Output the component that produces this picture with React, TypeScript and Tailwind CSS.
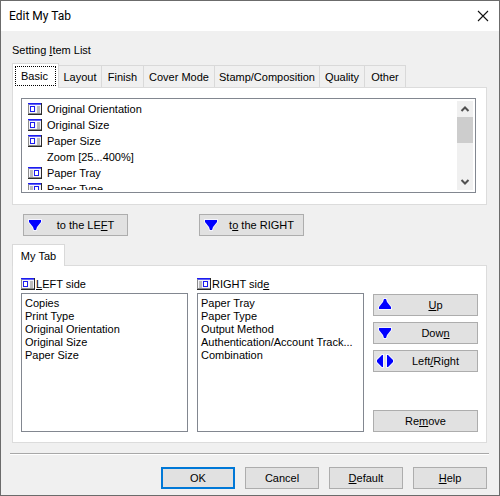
import type { ReactNode } from "react";

type Side = "left" | "right";
type ArrowKind = "up" | "down" | "both";

const tabs = [
  { name: "Layout", width: "w-[43px]" },
  { name: "Finish", width: "w-[42px]" },
  { name: "Cover Mode", width: "w-[71px]" },
  { name: "Stamp/Composition", width: "w-[105px]" },
  { name: "Quality", width: "w-[45px]" },
  { name: "Other", width: "w-[41px]" },
];

const items: { name: string; side?: Side }[] = [
  { name: "Original Orientation", side: "left" },
  { name: "Original Size", side: "left" },
  { name: "Paper Size", side: "left" },
  { name: "Zoom [25...400%]" },
  { name: "Paper Tray", side: "right" },
  { name: "Paper Type", side: "right" },
];

const leftItems = ["Copies", "Print Type", "Original Orientation", "Original Size", "Paper Size"];
const rightItems = [
  "Paper Tray",
  "Paper Type",
  "Output Method",
  "Authentication/Account Track...",
  "Combination",
];

function SideIcon({ side }: { side: Side }) {
  const active = side === "left" ? 2 : 6;
  const idle = side === "left" ? 9 : 2;
  return (
    <svg width="15" height="12" viewBox="0 0 15 12" shapeRendering="crispEdges" aria-hidden="true" className="shrink-0">
      <rect width="14" height="12" fill="#2a2a2a" />
      <rect width="13" height="11" fill="#8c8c8c" />
      <rect x="1" y="1" width="12" height="9" fill="#f4f4fa" />
      <rect width="13" height="1" fill="#1c1cf0" />
      <rect x="1" y="1" width="12" height="1" fill="#6060f4" />
      <rect x={idle} y="3" width="3" height="7" fill="#bcbcbc" />
      <rect x={active} y="3" width="5" height="6" fill="#1c1cf0" />
      <rect x={active + 1} y="4" width="3" height="4" fill="#fff" />
    </svg>
  );
}

function Arrow({ kind }: { kind: ArrowKind }) {
  const shape = {
    up: "M9 2 H11 L12 5 L16 10 V12 H4 V10 L8 5 Z",
    down: "M4 3 H16 V5 L12 10 L11 13 H9 L8 10 L4 5 Z",
    both: "M8 2 V14 H7 L2 9 V7 L7 2 Z M12 2 H13 L18 7 V9 L13 14 H12 Z",
  }[kind];
  return (
    <svg width="20" height="16" viewBox="0 0 20 16" aria-hidden="true" className="shrink-0">
      <path d={shape} fill="#0000ff" stroke="#f4f4ff" strokeWidth="2" paintOrder="stroke" />
    </svg>
  );
}

function Button({
  children,
  className = "",
  icon,
  primary = false,
}: {
  children: ReactNode;
  className?: string;
  icon?: ArrowKind;
  primary?: boolean;
}) {
  return (
    <button
      type="button"
      className={`flex h-[22px] items-center bg-[#e1e1e1] leading-4 ${primary ? "border-2 border-[#0078d7]" : "border border-[#adadad]"} ${icon ? "px-px" : ""} ${className}`}
    >
      {icon && <Arrow kind={icon} />}
      <span className="flex-1 text-center">{children}</span>
    </button>
  );
}

function ListColumn({ id, side, label, options }: { id: string; side: Side; label: ReactNode; options: string[] }) {
  return (
    <div className="flex min-w-0 flex-1 flex-col">
      <label htmlFor={id} className="flex h-4 items-center leading-4">
        <SideIcon side={side} />
        <span>{label}</span>
      </label>
      <select
        id={id}
        size={5}
        className="mt-px min-h-[80px] w-full flex-1 appearance-none overflow-hidden border border-[#828790] bg-white px-[3px] py-[3px] leading-[13px]"
      >
        {options.map((option) => (
          <option key={option} className="h-[13px] min-h-0 p-0 leading-[13px]">
            {option}
          </option>
        ))}
      </select>
    </div>
  );
}

export default function App() {
  return (
    <main className="flex min-h-screen w-full flex-col border border-[#6b6b6b] bg-[#f0f0f0] font-['Liberation_Sans',Arial,sans-serif] text-[11px] leading-4 text-black">
      <header className="flex h-[30px] items-center justify-between bg-white px-2">
        <h1 className="font-[Roboto,'Noto_Sans',sans-serif] text-xs leading-4">Edit My Tab</h1>
        <button type="button" aria-label="Close" className="flex size-4 items-center justify-center">
          <svg width="12" height="12" viewBox="0 0 12 12" aria-hidden="true">
            <path d="M1 1 L11 11 M11 1 L1 11" stroke="#111" strokeWidth="1.1" fill="none" />
          </svg>
        </button>
      </header>

      <div className="flex flex-1 flex-col pt-[11px] pr-3 pb-[6px] pl-[11px]">
        <h2 id="setting-list" className="leading-4">
          Setting <u>I</u>tem List
        </h2>

        <div role="tablist" aria-labelledby="setting-list" className="mt-[5px] flex h-6 items-end">
          <button
            type="button"
            role="tab"
            aria-selected="true"
            className="z-10 -mb-px h-[25px] w-[47px] border border-b-0 border-[#d9d9d9] bg-white p-[2px]"
          >
            <span className="flex h-5 items-center border border-dotted border-black pl-[5px]">Basic</span>
          </button>
          {tabs.map((tab) => (
            <button
              key={tab.name}
              type="button"
              role="tab"
              aria-selected="false"
              className={`h-[22px] border-t border-r border-[#d9d9d9] text-center whitespace-nowrap ${tab.width}`}
            >
              {tab.name}
            </button>
          ))}
        </div>

        <section className="border border-[#dcdcdc] bg-white pt-[10px] pr-[10px] pb-[11px] pl-2">
          <div className="flex h-[95px] border border-[#828790] p-[2px]">
            <ul role="listbox" aria-labelledby="setting-list" className="flex-1 overflow-hidden pl-1">
              {items.map((item) => (
                <li key={item.name} role="option" aria-selected="false" className="flex h-4 items-center gap-1">
                  <span className="flex w-[15px]">{item.side && <SideIcon side={item.side} />}</span>
                  {item.name}
                </li>
              ))}
            </ul>
            <div className="flex w-4 flex-col bg-[#f0f0f0]">
              <button type="button" aria-label="Scroll up" className="flex h-4 items-center justify-center">
                <svg width="10" height="8" viewBox="0 0 10 8" aria-hidden="true">
                  <path d="M1.500 6 L5 2.500 L8.500 6" stroke="#505050" strokeWidth="2" fill="none" />
                </svg>
              </button>
              <div className="h-[26px] bg-[#cdcdcd]" />
              <button type="button" aria-label="Scroll down" className="mt-auto flex h-4 items-center justify-center">
                <svg width="10" height="8" viewBox="0 0 10 8" aria-hidden="true">
                  <path d="M1.500 2 L5 5.500 L8.500 2" stroke="#505050" strokeWidth="2" fill="none" />
                </svg>
              </button>
            </div>
          </div>
        </section>

        <div className="mt-[9px] flex gap-[71px] pl-[11px]">
          <Button icon="down" className="w-[105px]">
            to the LE<u>F</u>T
          </Button>
          <Button icon="down" className="w-[105px]">
            t<u>o</u> the RIGHT
          </Button>
        </div>

        <div role="tablist" aria-label="My Tab" className="mt-2 flex">
          <button
            type="button"
            role="tab"
            aria-selected="true"
            className="z-10 -mb-px h-[22px] w-[53px] border border-b-0 border-[#d9d9d9] bg-white text-center leading-4"
          >
            My Tab
          </button>
        </div>

        <section className="flex flex-1 gap-[9px] border border-[#dcdcdc] bg-white px-2 py-[10px]">
          <ListColumn id="left-side" side="left" label={<><u>L</u>EFT side</>} options={leftItems} />
          <ListColumn id="right-side" side="right" label={<>RIGHT sid<u>e</u></>} options={rightItems} />
          <div className="flex w-[105px] flex-col gap-[6px] pt-[18px]">
            <Button icon="up"><u>U</u>p</Button>
            <Button icon="down">Dow<u>n</u></Button>
            <Button icon="both">Left<u>/</u>Right</Button>
            <Button className="mt-auto">Re<u>m</u>ove</Button>
          </div>
        </section>

        <hr className="-mx-0.5 mt-[10px] border-t border-b border-t-[#a8a8a8] border-b-white" />

        <footer className="mt-3 flex justify-end gap-[10px]">
          <Button primary className="w-[74px]">OK</Button>
          <Button className="w-[74px]">Cancel</Button>
          <Button className="w-[74px]"><u>D</u>efault</Button>
          <Button className="w-[74px]"><u>H</u>elp</Button>
        </footer>
      </div>
    </main>
  );
}
